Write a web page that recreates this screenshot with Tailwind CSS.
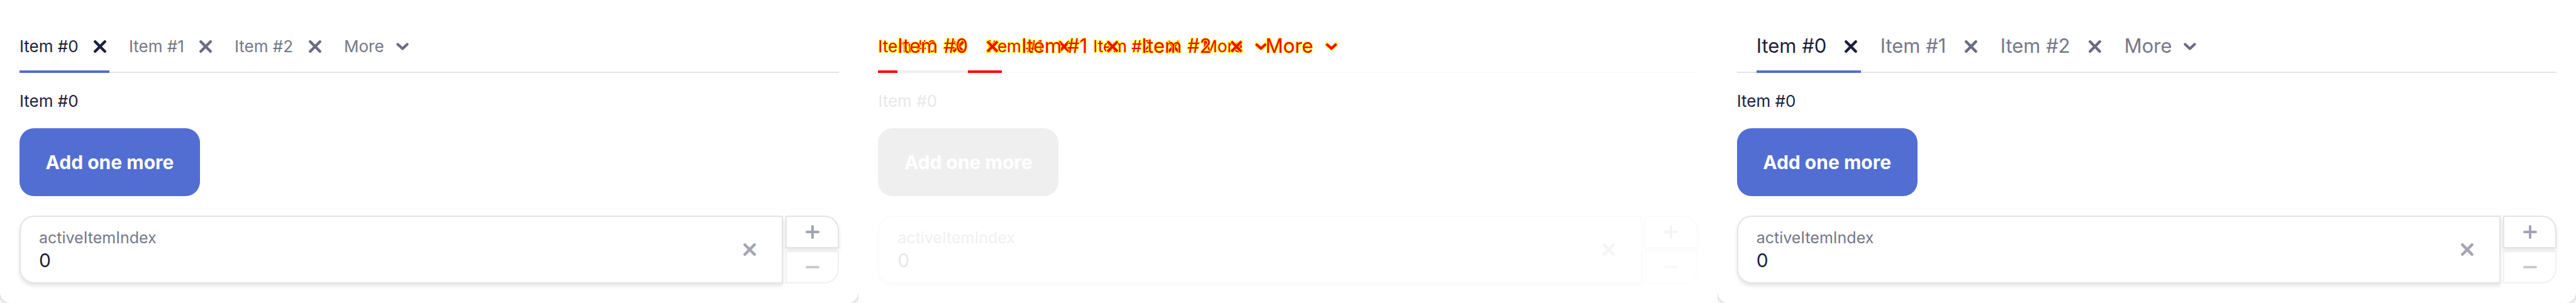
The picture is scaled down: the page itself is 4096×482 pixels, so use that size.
<!DOCTYPE html>
<html lang="en">
<head>
<meta charset="utf-8">
<title>Tabs comparison</title>
<script src="https://cdn.jsdelivr.net/npm/@tailwindcss/browser@4"></script>
</head>
<body class="bg-white font-['Inter','Liberation_Sans',sans-serif] text-[#1b1f3b]">
<svg class="hidden">
  <symbol id="cross" viewBox="0 0 20 20"><path d="M2.3 2.3L17.7 17.7M17.7 2.3L2.3 17.7" fill="none" stroke="currentColor" stroke-width="4.4" stroke-linecap="round"/></symbol>
  <symbol id="chevron" viewBox="0 0 20 20"><path d="M2.5 6.5L10 13.5L17.5 6.5" fill="none" stroke="currentColor" stroke-width="4.2" stroke-linecap="round" stroke-linejoin="round"/></symbol>
  <symbol id="cross-diff" viewBox="0 0 20 20" overflow="visible"><path d="M2 2L18 18M18 2L2 18" fill="none" stroke="#ff0" stroke-width="6" stroke-linecap="round"/><path d="M2 2L18 18M18 2L2 18" fill="none" stroke="#f00" stroke-width="4"/></symbol>
  <symbol id="chevron-diff" viewBox="0 0 20 20" overflow="visible"><path d="M2 6L10 13L18 6" fill="none" stroke="#ff0" stroke-width="6" stroke-linecap="round"/><path d="M2 6L10 13L18 6" fill="none" stroke="#f00" stroke-width="4"/></symbol>
  <symbol id="plus" viewBox="0 0 22 22"><path d="M11 2V20M2 11H20" fill="none" stroke="currentColor" stroke-width="4" stroke-linecap="round"/></symbol>
  <symbol id="minus" viewBox="0 0 22 22"><path d="M2 11H20" fill="none" stroke="currentColor" stroke-width="4" stroke-linecap="round"/></symbol>
</svg>
<main class="grid grid-cols-3">

  <!-- Before -->
  <section class="overflow-hidden">
    <div class="rounded-b-[17px] bg-white p-[31px] shadow-[0_0_10px_rgba(0,0,0,0.3)]">
      <nav class="flex h-[85px] gap-[31px] text-[26px] text-[#757889] shadow-[inset_0_-2px_#e4e4e4]">
        <div class="flex w-[143px] items-center justify-between border-b-4 border-[#526ed3] pt-1 text-[#1b1f3b]"><button class="whitespace-nowrap">Item #0</button><button aria-label="Remove item 0" class="flex w-[31px] justify-center"><svg class="size-5"><use href="#cross"/></svg></button></div>
        <div class="flex w-[137px] items-center justify-between"><button class="whitespace-nowrap">Item #1</button><button aria-label="Remove item 1" class="flex w-[31px] justify-center text-[#696c80]"><svg class="size-5"><use href="#cross"/></svg></button></div>
        <div class="flex w-[143px] items-center justify-between"><button class="whitespace-nowrap">Item #2</button><button aria-label="Remove item 2" class="flex w-[31px] justify-center text-[#696c80]"><svg class="size-5"><use href="#cross"/></svg></button></div>
        <button class="flex w-[108px] items-center justify-between">More<span class="flex w-[31px] justify-center text-[#696c80]"><svg class="size-5"><use href="#chevron"/></svg></span></button>
      </nav>
      <p class="mt-[26px] text-[26px] leading-[38px]">Item #0</p>
      <button class="mt-6 flex h-[108px] w-[287px] items-center justify-center rounded-[23px] bg-[#526ed3] text-[30px] font-bold whitespace-nowrap text-white">Add one more</button>
      <div class="mt-[31px] flex h-[108px] gap-1">
        <div class="flex flex-1 items-center rounded-l-[23px] border-2 border-[#e4e4e4] bg-white pr-[31px] pl-[29px] shadow-[0_4px_6px_rgba(0,0,0,0.1)]">
          <div class="flex flex-1 flex-col gap-0.5">
            <label for="index-before" class="text-[25px] leading-8 text-[#757889]">activeItemIndex</label>
            <input id="index-before" value="0" class="h-9 w-full text-[30px] leading-9 outline-none">
          </div>
          <button aria-label="Clear" class="flex w-10 justify-center text-[#a2a5b1]"><svg class="size-5"><use href="#cross"/></svg></button>
        </div>
        <div class="flex w-[85px] flex-col gap-1">
          <button aria-label="Increase" class="flex flex-1 items-center justify-center rounded-tr-[23px] border-2 border-[#e4e4e4] bg-white text-[#a2a5b1] shadow-[0_4px_6px_rgba(0,0,0,0.1)]"><svg class="size-[22px]"><use href="#plus"/></svg></button>
          <button aria-label="Decrease" disabled class="flex flex-1 items-center justify-center rounded-br-[23px] border-2 border-[#f0f0f0] bg-white/60 text-[#c9cbd2]"><svg class="size-[22px]"><use href="#minus"/></svg></button>
        </div>
      </div>
    </div>
  </section>

  <!-- Difference: both tab rows are drawn over each other -->
  <section class="overflow-hidden">
    <div class="rounded-b-[17px] bg-white p-[31px] text-[#e8e8e8] shadow-[0_0_8px_rgba(0,0,0,0.04)]">
      <div class="relative h-[85px] shadow-[inset_0_-2px_#fbfbfb]">
        <nav class="flex h-full gap-[31px] text-[26px] text-[#ff0000] [-webkit-text-stroke:2px_#ffff00] [paint-order:stroke_fill]">
          <div class="flex w-[143px] items-center justify-between"><button class="whitespace-nowrap">Item #0</button><button aria-label="Remove item 0" class="flex w-[31px] justify-center"><svg class="size-5"><use href="#cross-diff"/></svg></button></div>
          <div class="flex w-[137px] items-center justify-between"><button class="whitespace-nowrap">Item #1</button><button aria-label="Remove item 1" class="flex w-[31px] justify-center"><svg class="size-5"><use href="#cross-diff"/></svg></button></div>
          <div class="flex w-[143px] items-center justify-between"><button class="whitespace-nowrap">Item #2</button><button aria-label="Remove item 2" class="flex w-[31px] justify-center"><svg class="size-5"><use href="#cross-diff"/></svg></button></div>
          <button class="flex w-[108px] items-center justify-between">More<span class="flex w-[31px] justify-center"><svg class="size-5"><use href="#chevron-diff"/></svg></span></button>
        </nav>
        <nav class="absolute inset-0 flex gap-[31px] pl-[31px] text-[31px] text-[#ff0000] [-webkit-text-stroke:2px_#ffff00] [paint-order:stroke_fill]">
          <div class="flex w-[166px] items-center justify-between"><button class="whitespace-nowrap">Item #0</button><button aria-label="Remove item 0" class="flex w-[31px] justify-center"><svg class="size-5"><use href="#cross-diff"/></svg></button></div>
          <div class="flex w-[160px] items-center justify-between"><button class="whitespace-nowrap">Item #1</button><button aria-label="Remove item 1" class="flex w-[31px] justify-center"><svg class="size-5"><use href="#cross-diff"/></svg></button></div>
          <div class="flex w-[166px] items-center justify-between"><button class="whitespace-nowrap">Item #2</button><button aria-label="Remove item 2" class="flex w-[31px] justify-center"><svg class="size-5"><use href="#cross-diff"/></svg></button></div>
          <button class="flex w-[120px] items-center justify-between">More<span class="flex w-[31px] justify-center"><svg class="size-5"><use href="#chevron-diff"/></svg></span></button>
        </nav>
        <div class="absolute bottom-0 left-0 flex h-1"><span class="w-[31px] bg-[#ff0000]"></span><span class="w-[112px] bg-[#efefef]"></span><span class="w-[54px] bg-[#ff0000]"></span></div>
      </div>
      <p class="mt-[26px] text-[26px] leading-[38px]">Item #0</p>
      <button class="mt-6 flex h-[108px] w-[287px] items-center justify-center rounded-[23px] bg-[#efefef] text-[30px] font-bold whitespace-nowrap text-white">Add one more</button>
      <div class="mt-[31px] flex h-[108px] gap-1">
        <div class="flex flex-1 items-center rounded-l-[23px] border-2 border-[#fbfbfb] bg-white pr-[31px] pl-[29px] shadow-[0_4px_6px_rgba(0,0,0,0.02)]">
          <div class="flex flex-1 flex-col gap-0.5">
            <label for="index-diff" class="text-[25px] leading-8 text-[#f0f0f0]">activeItemIndex</label>
            <input id="index-diff" value="0" class="h-9 w-full text-[30px] leading-9 outline-none">
          </div>
          <button aria-label="Clear" class="flex w-10 justify-center text-[#f5f5f5]"><svg class="size-5"><use href="#cross"/></svg></button>
        </div>
        <div class="flex w-[85px] flex-col gap-1">
          <button aria-label="Increase" class="flex flex-1 items-center justify-center rounded-tr-[23px] border-2 border-[#fbfbfb] bg-white text-[#f5f5f5] shadow-[0_4px_6px_rgba(0,0,0,0.02)]"><svg class="size-[22px]"><use href="#plus"/></svg></button>
          <button aria-label="Decrease" disabled class="flex flex-1 items-center justify-center rounded-br-[23px] border-2 border-[#fcfcfc] bg-white/60 text-[#f8f8f8]"><svg class="size-[22px]"><use href="#minus"/></svg></button>
        </div>
      </div>
    </div>
  </section>

  <!-- After -->
  <section class="overflow-hidden">
    <div class="rounded-b-[17px] bg-white p-[31px] shadow-[0_0_10px_rgba(0,0,0,0.3)]">
      <nav class="flex h-[85px] gap-[31px] pl-[31px] text-[31px] text-[#757889] shadow-[inset_0_-2px_#e4e4e4]">
        <div class="flex w-[166px] items-center justify-between border-b-4 border-[#526ed3] pt-1 text-[#1b1f3b]"><button class="whitespace-nowrap">Item #0</button><button aria-label="Remove item 0" class="flex w-[31px] justify-center"><svg class="size-5"><use href="#cross"/></svg></button></div>
        <div class="flex w-[160px] items-center justify-between"><button class="whitespace-nowrap">Item #1</button><button aria-label="Remove item 1" class="flex w-[31px] justify-center text-[#696c80]"><svg class="size-5"><use href="#cross"/></svg></button></div>
        <div class="flex w-[166px] items-center justify-between"><button class="whitespace-nowrap">Item #2</button><button aria-label="Remove item 2" class="flex w-[31px] justify-center text-[#696c80]"><svg class="size-5"><use href="#cross"/></svg></button></div>
        <button class="flex w-[120px] items-center justify-between">More<span class="flex w-[31px] justify-center text-[#696c80]"><svg class="size-5"><use href="#chevron"/></svg></span></button>
      </nav>
      <p class="mt-[26px] text-[26px] leading-[38px]">Item #0</p>
      <button class="mt-6 flex h-[108px] w-[287px] items-center justify-center rounded-[23px] bg-[#526ed3] text-[30px] font-bold whitespace-nowrap text-white">Add one more</button>
      <div class="mt-[31px] flex h-[108px] gap-1">
        <div class="flex flex-1 items-center rounded-l-[23px] border-2 border-[#e4e4e4] bg-white pr-[31px] pl-[29px] shadow-[0_4px_6px_rgba(0,0,0,0.1)]">
          <div class="flex flex-1 flex-col gap-0.5">
            <label for="index-after" class="text-[25px] leading-8 text-[#757889]">activeItemIndex</label>
            <input id="index-after" value="0" class="h-9 w-full text-[30px] leading-9 outline-none">
          </div>
          <button aria-label="Clear" class="flex w-10 justify-center text-[#a2a5b1]"><svg class="size-5"><use href="#cross"/></svg></button>
        </div>
        <div class="flex w-[85px] flex-col gap-1">
          <button aria-label="Increase" class="flex flex-1 items-center justify-center rounded-tr-[23px] border-2 border-[#e4e4e4] bg-white text-[#a2a5b1] shadow-[0_4px_6px_rgba(0,0,0,0.1)]"><svg class="size-[22px]"><use href="#plus"/></svg></button>
          <button aria-label="Decrease" disabled class="flex flex-1 items-center justify-center rounded-br-[23px] border-2 border-[#f0f0f0] bg-white/60 text-[#c9cbd2]"><svg class="size-[22px]"><use href="#minus"/></svg></button>
        </div>
      </div>
    </div>
  </section>
</main>
</body>
</html>
